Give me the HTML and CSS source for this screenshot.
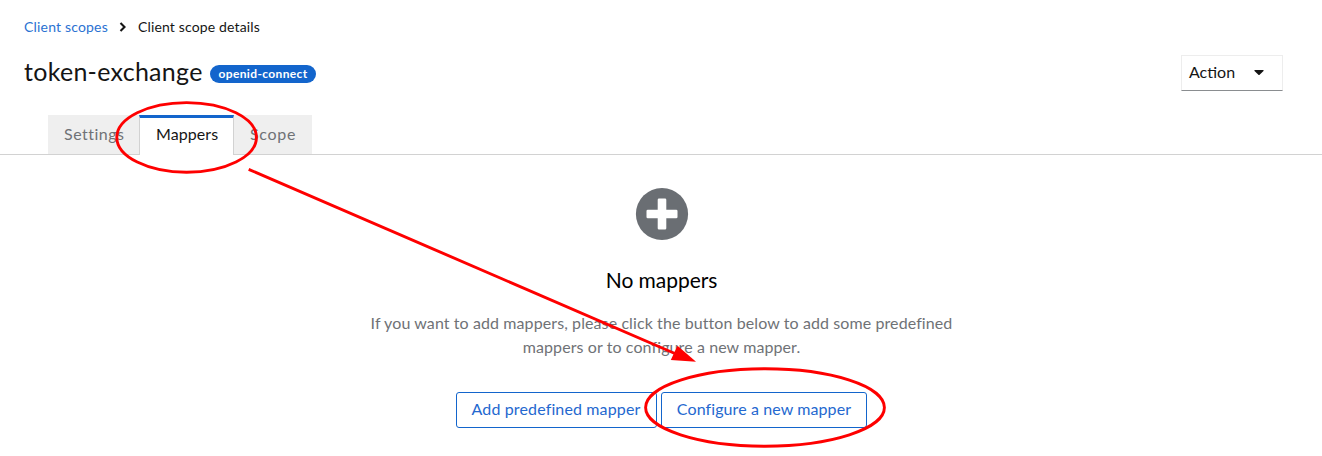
FILE: index.html
```
<!DOCTYPE html>
<html lang="en">
<head>
<meta charset="utf-8">
<title>Client scope details</title>
<link rel="stylesheet" href="styles.css">
</head>
<body>
<main class="page">
  <nav class="breadcrumb">
    <a class="crumb-link">Client scopes</a>
    <svg class="crumb-arrow" width="8" height="10" viewBox="0 0 8 10"><path d="M1.5 1 5.5 5 1.5 9" fill="none" stroke="#151515" stroke-width="2.1"/></svg>
    <span class="crumb-current">Client scope details</span>
  </nav>
  <header class="heading">
    <h1 class="title">token-exchange</h1>
    <span class="badge">openid-connect</span>
    <button class="action"><span class="action-label">Action</span><svg class="caret" width="10" height="6" viewBox="0 0 10 6"><path d="M.8 0h8.4q.8.3.3 1L5.6 4.8q-.6.5-1.2 0L.5 1Q0 .3.8 0Z" fill="#151515"/></svg></button>
  </header>
  <div class="tabs">
    <button class="tab tab-settings"><span>Settings</span></button>
    <button class="tab tab-current"><span>Mappers</span></button>
    <button class="tab tab-scope"><span>Scope</span></button>
  </div>
  <section class="empty">
    <svg class="empty-icon" width="54" height="54" viewBox="0 0 54 54"><circle cx="27" cy="27" r="26.1" fill="#6a6e73"/><path d="M24 11.5h6q1.3 0 1.3 1.3v9.9h9.9q1.3 0 1.3 1.3v6q0 1.3-1.3 1.3h-9.9v9.9q0 1.3-1.3 1.3h-6q-1.3 0-1.3-1.3v-9.9h-9.9q-1.3 0-1.3-1.3v-6q0-1.3 1.3-1.3h9.9v-9.9q0-1.3 1.3-1.3Z" fill="#fff"/></svg>
    <h2 class="empty-title">No mappers</h2>
    <p class="empty-body">If you want to add mappers, please click the button below to add some predefined<br>mappers or to configure a new mapper.</p>
    <div class="buttons">
      <button class="button add">Add predefined mapper</button>
      <button class="button configure">Configure a new mapper</button>
    </div>
  </section>
  <svg class="annotations" width="1322" height="456" viewBox="0 0 1322 456">
    <g fill="none" stroke="#fe0000" stroke-width="2.9">
      <ellipse cx="186.6" cy="137.4" rx="69.8" ry="34.8"/>
      <ellipse cx="765" cy="407.5" rx="119.4" ry="38.7"/>
      <path d="M248.7 169.3 676 354"/>
    </g>
    <path d="M677.5 345.8 696 361.7 670.8 360Z" fill="#fe0000"/>
  </svg>
</main>
</body>
</html>
```
FILE: styles.css
```
* { box-sizing: border-box; }
body { margin: 0; background: #fff; color: #151515; font-family: Lato, "Open Sans", sans-serif; font-size: 16px; }
button { font: inherit; margin: 0; padding: 0; white-space: nowrap; }
h1, h2, p { margin: 0; font-weight: 400; white-space: nowrap; }
.page { position: relative; width: 1322px; height: 456px; overflow: hidden; }
.breadcrumb { display: flex; align-items: center; height: 55px; padding: 0 24px 1px; font-size: 14px; line-height: 21px; }
.crumb-link { width: 84px; padding-bottom: 2px; color: #2b72d2; white-space: nowrap; letter-spacing: .18px; }
.crumb-arrow { margin: 0 11px; }
.crumb-current { padding-bottom: 2px; white-space: nowrap; letter-spacing: .15px; }
.heading { display: flex; height: 36px; padding: 0 39px 0 24px; }
.title { width: 186px; font-size: 25px; line-height: 33px; letter-spacing: .28px; }
.badge { width: 106px; height: 18px; margin-top: 10px; border-radius: 9px; background: #1365cc; color: #fff; font-size: 12px; font-weight: 700; line-height: 18px; letter-spacing: .36px; text-align: center; }
.action { display: flex; align-items: center; width: 102px; height: 36px; margin-left: auto; padding-left: 7px; border: 1px solid #ededed; border-bottom-color: #8a8d90; background: #fff; color: #151515; }
.action-label { width: 65px; padding-bottom: 3px; text-align: left; }
.tabs { display: flex; height: 40px; margin-top: 24px; padding-left: 48px; background: linear-gradient(#d2d2d2, #d2d2d2) 0 39px / 100% 1px no-repeat; }
.tab { height: 39px; border: 0; background: #efefef; color: #6f7276; text-align: left; padding: 0 0 2px 16px; line-height: 37px; }
.tab-settings { width: 91px; letter-spacing: .5px; }
.tab-current { width: 95px; height: 40px; padding-bottom: 5px; border: 1px solid #d2d2d2; border-top: 3px solid #1365cc; border-bottom: 0; background: #fff; color: #151515; line-height: 32px; letter-spacing: .08px; }
.tab-scope { width: 78px; letter-spacing: .7px; }
.empty { display: flex; flex-direction: column; align-items: center; padding-top: 32px; }
.empty-icon { display: block; margin-left: 2px; }
.empty-title { margin-top: 24px; padding-left: 1px; font-size: 21px; line-height: 30px; letter-spacing: -.05px; color: #000; }
.empty-body { margin-top: 16px; padding-left: 1px; text-align: center; line-height: 24px; letter-spacing: .095px; color: #6f7276; }
.buttons { display: flex; gap: 4px; margin-top: 33px; }
.button { height: 36px; padding-bottom: 3px; border: 1px solid #1365cc; border-radius: 3px; background: #fff; color: #2468cf; letter-spacing: .13px; }
.add { width: 201px; }
.configure { width: 206px; padding-left: 1px; letter-spacing: .1px; }
.annotations { position: absolute; top: 0; left: 0; pointer-events: none; }
```
